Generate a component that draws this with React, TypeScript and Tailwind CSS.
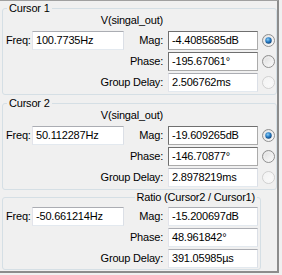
import React from "react";

type FieldProps = { value: string; dark?: boolean; w?: string };

function Field({ value, dark, w = "w-[90px]" }: FieldProps) {
  const border = dark
    ? "border-t-[#6f6f6f] border-l-[#6f6f6f] border-r-[#ababab] border-b-[#ababab]"
    : "border-t-[#abadb3] border-l-[#e2e3ea] border-r-[#dbdfe6] border-b-[#e3e9ef]";
  return (
    <div
      className={`${w} h-[19px] shrink-0 bg-white border ${border} flex items-center pl-[3px] whitespace-nowrap overflow-hidden`}
    >
      {value}
    </div>
  );
}

function Radio({ state, id }: { state: "on" | "off" | "disabled"; id: string }) {
  const disabled = state === "disabled";
  return (
    <svg width="13" height="13" viewBox="0 0 13 13" className="block">
      <defs>
        <linearGradient id={`bg-${id}`} x1="0" y1="0" x2="1" y2="1">
          <stop offset="0" stopColor={disabled ? "#f2f2f2" : "#d9d9d9"} />
          <stop offset="1" stopColor={disabled ? "#fbfbfb" : "#ffffff"} />
        </linearGradient>
        <radialGradient id={`dot-${id}`} cx="0.4" cy="0.35" r="0.7">
          <stop offset="0" stopColor="#8fd0f5" />
          <stop offset="0.5" stopColor="#2a7fc8" />
          <stop offset="1" stopColor="#0d3f73" />
        </radialGradient>
      </defs>
      <circle
        cx="6.5"
        cy="6.5"
        r="6"
        fill={`url(#bg-${id})`}
        stroke={disabled ? "#cfcfcf" : "#8f8f8f"}
        strokeWidth="1"
      />
      <circle cx="6.5" cy="6.5" r="4.3" fill="none" stroke={disabled ? "#f4f4f4" : "#f0f0f0"} strokeWidth="0.8" />
      {state === "on" && <circle cx="6.5" cy="6.5" r="3.2" fill={`url(#dot-${id})`} />}
    </svg>
  );
}

type RowProps = {
  freq?: string;
  label: string;
  value: string;
  dark?: boolean;
  radio?: "on" | "off" | "disabled";
  id: string;
};

function Row({ freq, label, value, dark, radio, id }: RowProps) {
  return (
    <div className="flex items-center h-[19px]">
      <div className="w-[121px] shrink-0 flex items-center">
        {freq !== undefined && (
          <>
            <span className="w-[29px] pl-[3px] shrink-0">Freq:</span>
            <Field value={freq} w="w-[92px]" />
          </>
        )}
      </div>
      <div className="w-[39px] shrink-0 flex justify-end whitespace-nowrap">{label}</div>
      <div className="ml-[5px]">
        <Field value={value} dark={dark} />
      </div>
      {radio && (
        <div className="ml-[4px]">
          <Radio state={radio} id={id} />
        </div>
      )}
    </div>
  );
}

type CursorData = {
  title: string;
  freq: string;
  mag: string;
  phase: string;
  gd: string;
  id: string;
};

function CursorGroup({ d, className }: { d: CursorData; className: string }) {
  return (
    <div className={`relative ml-[2px] w-[275px] border border-[#d5dfe5] rounded-[3px] pt-[5px] pb-[2px] ${className}`}>
      <div className="absolute left-[4px] top-[-7px] h-[13px] leading-[13px] px-[2px] bg-[#f0f0f0]">{d.title}</div>
      <div className="flex h-[13px] leading-[13px]">
        <div className="w-[160px] flex justify-end whitespace-nowrap">V(singal_out)</div>
      </div>
      <div className="mt-[4px] flex flex-col gap-[2px]">
        <Row freq={d.freq} label="Mag:" value={d.mag} dark radio="on" id={`${d.id}a`} />
        <Row label="Phase:" value={d.phase} dark radio="off" id={`${d.id}b`} />
        <Row label="Group Delay:" value={d.gd} radio="disabled" id={`${d.id}c`} />
      </div>
    </div>
  );
}

export default function App() {
  return (
    <div className="w-[282px] h-[275px] bg-[#f0f0f0] text-[11px] leading-[13px] text-black tracking-[-0.2px] font-['Liberation_Sans',Arial,sans-serif]">
      <div className="w-[279px] h-[273px] border-t border-t-[#a0a0a0] border-r-2 border-r-[#8c8c8c] border-b-2 border-b-[#8c8c8c] overflow-hidden">
        <CursorGroup
          className="mt-[7px]"
          d={{ title: "Cursor 1", freq: "100.7735Hz", mag: "-4.4085685dB", phase: "-195.67061°", gd: "2.506762ms", id: "c1" }}
        />
        <CursorGroup
          className="mt-[8px]"
          d={{ title: "Cursor 2", freq: "50.112287Hz", mag: "-19.609265dB", phase: "-146.70877°", gd: "2.8978219ms", id: "c2" }}
        />
        <div className="relative ml-[2px] mt-[7px] w-[259px] border border-[#d5dfe5] rounded-[3px] pt-[9px] pb-[1px]">
          <div className="absolute right-[3px] top-[-7px] h-[13px] leading-[13px] px-[2px] bg-[#f0f0f0] whitespace-nowrap">
            Ratio (Cursor2 / Cursor1)
          </div>
          <div className="flex flex-col gap-[2px]">
            <Row freq="-50.661214Hz" label="Mag:" value="-15.200697dB" id="r1" />
            <Row label="Phase:" value="48.961842°" id="r2" />
            <Row label="Group Delay:" value="391.05985µs" id="r3" />
          </div>
        </div>
      </div>
    </div>
  );
}
